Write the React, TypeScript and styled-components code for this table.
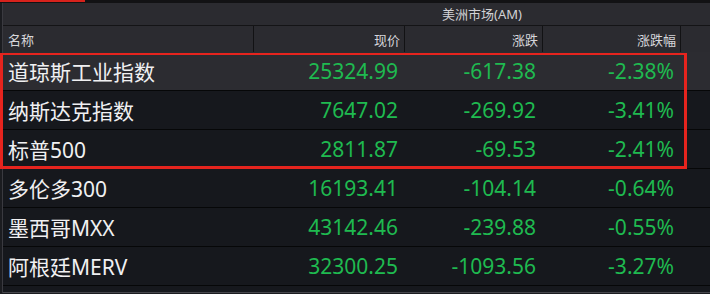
import React from "react";
import styled, { createGlobalStyle } from "styled-components";

const Global = createGlobalStyle`
  html, body { margin: 0; padding: 0; background: #1b1c20; }
  body { width: 710px; height: 294px; overflow: hidden; }
  * { box-sizing: border-box; }
`;

const COLS = "251px 151px 138px 138px 1fr";

const Page = styled.div`
  position: relative;
  width: 710px;
  height: 294px;
  background: #1b1c20;
  font-family: "Noto Sans", "Noto Sans CJK SC", sans-serif;
`;

const TopStrip = styled.div`
  height: 3px;
  background: #121214;
  display: flex;
  align-items: flex-start;
`;

const TabMark = styled.div`
  width: 85px;
  height: 2px;
  background: #d7221c;
`;

const Table = styled.div`
  margin-left: 2px;
  border-left: 1px solid #3a3a40;
  display: flex;
  flex-direction: column;
`;

const GroupHeader = styled.div`
  display: grid;
  grid-template-columns: 251px 1fr;
  height: 23px;
  background: #2b2b30;
  border-bottom: 1px solid #141416;
`;

const GroupTitle = styled.div`
  display: flex;
  align-items: center;
  justify-content: center;
  font-size: 13px;
  color: #d2d2d6;
  padding-bottom: 1px;
`;

const ColHeader = styled.div`
  display: grid;
  grid-template-columns: ${COLS};
  height: 26px;
  background: #2b2b30;
`;

const HeadCell = styled.div<{ $align?: "left" | "right"; $sep?: boolean }>`
  display: flex;
  align-items: center;
  justify-content: ${(p) => (p.$align === "left" ? "flex-start" : "flex-end")};
  padding: ${(p) => (p.$align === "left" ? "0 0 0 5px" : "0 4px 0 0")};
  font-size: 13px;
  color: #d6d6da;
  border-right: ${(p) => (p.$sep ? "1px solid #121214" : "none")};
`;

const Row = styled.div<{ $active?: boolean }>`
  display: grid;
  grid-template-columns: ${COLS};
  height: 39px;
  background: ${(p) => (p.$active ? "#2c2c31" : "#16181d")};
  border-bottom: 1px solid #060708;
`;

const NameCell = styled.div`
  display: flex;
  align-items: center;
  padding-left: 5px;
  font-size: 21px;
  color: #f0f0f2;
  white-space: nowrap;
`;

const NumCell = styled.div`
  display: flex;
  align-items: center;
  justify-content: flex-end;
  padding-right: 7px;
  font-size: 21px;
  color: #1fba50;
  white-space: nowrap;
`;

const Footer = styled.div`
  height: 7px;
  background: #16181d;
  border-bottom: 1px solid #46464c;
`;

const Highlight = styled.div`
  position: absolute;
  left: 0;
  top: 53px;
  width: 687px;
  height: 116px;
  border: 3px solid #e6241e;
  border-top-width: 2px;
  pointer-events: none;
`;

type Item = { name: string; price: string; change: string; pct: string };

const DATA: Item[] = [
  { name: "道琼斯工业指数", price: "25324.99", change: "-617.38", pct: "-2.38%" },
  { name: "纳斯达克指数", price: "7647.02", change: "-269.92", pct: "-3.41%" },
  { name: "标普500", price: "2811.87", change: "-69.53", pct: "-2.41%" },
  { name: "多伦多300", price: "16193.41", change: "-104.14", pct: "-0.64%" },
  { name: "墨西哥MXX", price: "43142.46", change: "-239.88", pct: "-0.55%" },
  { name: "阿根廷MERV", price: "32300.25", change: "-1093.56", pct: "-3.27%" },
];

export default function App() {
  return (
    <Page>
      <Global />
      <TopStrip>
        <TabMark />
      </TopStrip>
      <Table>
        <GroupHeader>
          <div />
          <GroupTitle>美洲市场(AM)</GroupTitle>
        </GroupHeader>
        <ColHeader>
          <HeadCell $align="left" $sep>名称</HeadCell>
          <HeadCell $sep>现价</HeadCell>
          <HeadCell $sep>涨跌</HeadCell>
          <HeadCell $sep>涨跌幅</HeadCell>
          <div />
        </ColHeader>
        {DATA.map((d, i) => (
          <Row key={d.name} $active={i === 0}>
            <NameCell>{d.name}</NameCell>
            <NumCell>{d.price}</NumCell>
            <NumCell>{d.change}</NumCell>
            <NumCell>{d.pct}</NumCell>
            <div />
          </Row>
        ))}
        <Footer />
      </Table>
      <Highlight />
    </Page>
  );
}
